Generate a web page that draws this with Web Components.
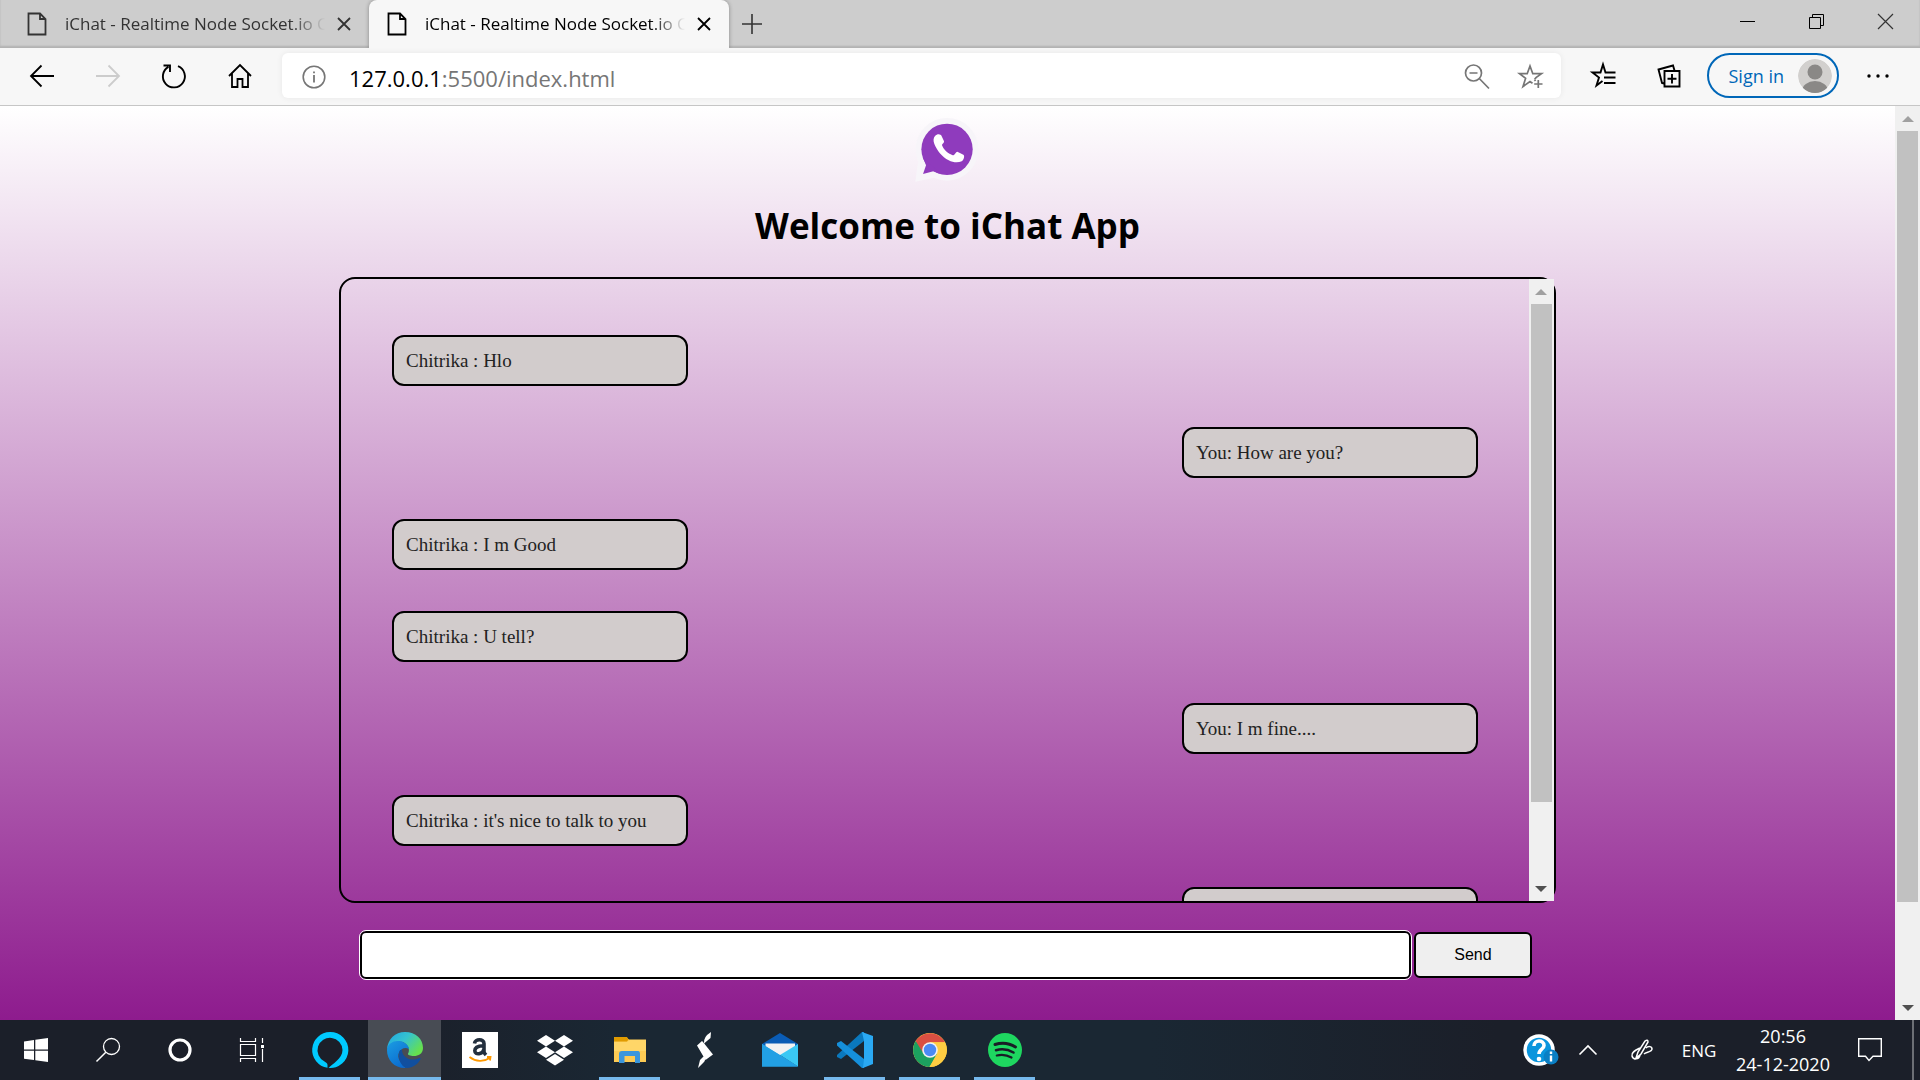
<!DOCTYPE html>
<html lang="en">
<head>
<meta charset="utf-8">
<title>iChat - Realtime Node Socket.io Chat App</title>
<style>
html,body{margin:0;height:100%}
body{font-family:"Open Sans","Noto Sans",sans-serif;overflow:hidden}
</style>
</head>
<body>
<desktop-screen></desktop-screen>
<script>
const ICONS = {
  file: [20,24,'<path d="M1.5 1.5H13L18.5 7V22.5H1.5ZM13 1.5V7H18.5" fill="none" stroke="currentColor" stroke-width="1.8"/>'],
  x: [14,14,'<path d="M1 1L13 13M13 1L1 13" stroke="currentColor" stroke-width="1.8"/>'],
  plus: [20,20,'<path d="M10 0V20M0 10H20" stroke="#333" stroke-width="1.6"/>'],
  min: [15,15,'<path d="M0 7.5H15" stroke="#000"/>'],
  restore: [15,15,'<path d="M.5 3.5H11.5V14.5H.5ZM3.5 3.5V.5H14.5V11.5H11.5" fill="none" stroke="#000"/>'],
  close: [15,15,'<path d="M0 0L15 15M15 0L0 15" stroke="#333" stroke-width="1.2"/>'],
  back: [24,22,'<path d="M11.5 .5L1 11L11.5 21.5M1 11H24" fill="none" stroke="currentColor" stroke-width="1.8"/>'],
  forward: [24,22,'<path d="M12.5 .5L23 11L12.5 21.5M23 11H0" fill="none" stroke="currentColor" stroke-width="1.8"/>'],
  reload: [24,26,'<path d="M16 3.2A11 11 0 1 1 6.5 3.8M1.5 2.5H8V9" fill="none" stroke="#000" stroke-width="1.9"/>'],
  home: [24,26,'<path d="M1 13L12 2L23 13M4 10.5V24H9.5V16H14.5V24H20V10.5" fill="none" stroke="#000" stroke-width="1.8"/>'],
  info: [24,24,'<circle cx="12" cy="12" r="10.8" fill="none" stroke="#767676" stroke-width="1.6"/><path d="M12 10V17.5M12 6.5V8.3" stroke="#767676" stroke-width="1.8"/>'],
  zoomout: [26,26,'<circle cx="9.5" cy="9" r="8" fill="none" stroke="#767676" stroke-width="1.7"/><path d="M15.3 14.5L25 24.5M5.5 9H13.5" stroke="#767676" stroke-width="1.7"/>'],
  star: [26,26,'<path d="M16.5 15.5L18 13.6L23.5 9.7H14.8L12 2L9.2 9.7H1.5L7.6 14.3L5 22.5L12 17.5L14.5 19.3M16.5 15.5L17.5 17M20.3 16V24M16.2 20H24.5" fill="none" stroke="#767676" stroke-width="1.7"/>'],
  favs: [26,26,'<path d="M23.5 9.5H14.5L12 1.5L9.5 9.5H1.5L8 14.5L5.5 22.5L11.5 18M14.5 9.5H24.5M13 14.5H24.5M13 20H24.5" fill="none" stroke="#000" stroke-width="1.9"/>'],
  collect: [24,24,'<path d="M8 7H22.5V22.5H7.5V7ZM15 10V19.5M10.5 14.8H19.5M7 19.5L5 19L1.5 5.5L16 1.5L17.5 6.5" fill="none" stroke="#000" stroke-width="1.9"/>'],
  avatar: [34,34,'<defs><clipPath id="c"><circle cx="17" cy="17" r="17"/></clipPath></defs><g clip-path="url(#c)"><circle cx="17" cy="17" r="17" fill="#d2d0ce"/><circle cx="17" cy="13" r="7.5" fill="#8a8886"/><ellipse cx="17" cy="32" rx="13" ry="10" fill="#8a8886"/></g>'],
  dots: [24,24,'<circle cx="3" cy="12" r="1.7"/><circle cx="12" cy="12" r="1.7"/><circle cx="21" cy="12" r="1.7"/>'],
  logo: [67,67,'<g transform="translate(-173.3 -16.7) scale(.33333)"><circle cx="619" cy="147" r="94" fill="#f7f5f9"/><path d="M532 184L524 244L580 232Z" fill="#f7f5f9"/><circle cx="619" cy="147" r="77" fill="#8f3bbd"/><path d="M546 170L556 195L547 221L578 213L600 222Z" fill="#8f3bbd"/><path d="M583 107C590 100 600 101 603 108L610 123C611 128 603 131 604 135C608 148 624 161 636 165C641 166 644 156 650 154L668 163C673 167 669 179 663 183C652 188 637 187 624 180C604 170 588 149 581 131C577 121 578 112 583 107Z" fill="#fff"/></g>'],
  win: [24,24,'<path d="M0 3.5L10 2V11.5H0ZM11.3 1.8L24 0V11.5H11.3ZM0 12.7H10V22L0 20.7ZM11.3 12.7H24V24L11.3 22.3Z" fill="#fff"/>'],
  search: [24,24,'<circle cx="15.5" cy="8.5" r="8" fill="none" stroke="#fff" stroke-width="1.3"/><path d="M9.8 14.2L.5 23.5" stroke="#fff" stroke-width="1.5"/>'],
  cortana: [24,24,'<circle cx="12" cy="12" r="10" fill="none" stroke="#fff" stroke-width="3.2"/>'],
  taskview: [24,24,'<path d="M.5 0V3.5H15.5V0M.5 6.5H15.5V17.5H.5ZM.5 24V20.5H15.5V24M22.5 0V5M22.5 11V24" fill="none" stroke="#fff" stroke-width="1.2"/><path d="M21 7H24V10H21Z" fill="#fff"/>'],
  alexa: [36,36,'<path fill="#00caff" fill-rule="evenodd" d="M18 0A18 18 0 0 0 15.5 35.8V33C15.5 31 14 30.5 12.5 29.5A12.5 12.5 0 1 1 30.5 18C30.5 27 20 32 16.5 35.9A18 18 0 1 0 18 0Z"/>'],
  edge: [36,36,'<defs><linearGradient id="a" x1="0" y1="0" x2="1" y2=".6"><stop offset="0" stop-color="#1fa5e3"/><stop offset=".5" stop-color="#35c3cf"/><stop offset="1" stop-color="#66e04e"/></linearGradient><linearGradient id="b" x1="0" y1="0" x2=".6" y2="1"><stop offset="0" stop-color="#1b9de2"/><stop offset="1" stop-color="#0b6bd0"/></linearGradient></defs><path d="M0 17C1 7 8 0 18 0C29 0 36 7 36 16C36 22 31 24 27 24C23 24 20.5 23 21 21.5C23 19 22 13 16 10C10 8 3 11 0 17Z" fill="url(#a)"/><path d="M0 18C0 12 6 8.5 12 9C18 9.5 22 14 22 17C15 13 8 22 13 29C16 33 20 36 18 36C7 36 0 28 0 18Z" fill="url(#b)"/><path d="M13 18C9 27 16 36 20 36C27 35.5 32 31 33.5 27C34 26 33 25.8 32 26C25 30 15 26 15 18Z" fill="#114f9f"/>'],
  amazon: [36,36,'<path d="M0 0H36V36H0Z" fill="#fff"/><path d="M12.5 11.5C13 6.5 22 6.5 22 11.5V19.5C22 21 23 22 24 23M21.5 13.8C15.5 14 12.8 15.5 12.8 18.8C12.8 23.5 21 22.5 22 17" fill="none" stroke="#232f3e" stroke-width="3.6"/><path d="M7.5 25C14 30 22 30 27.5 26M25 25L28.5 25L28 28.5" fill="none" stroke="#f90" stroke-width="1.8"/>'],
  dropbox: [36,31,'<path d="M9 0L18 5.7L9 11.4L0 5.7ZM27 0L36 5.7L27 11.4L18 5.7ZM9 11.6L18 17.3L9 23L0 17.3ZM27 11.6L36 17.3L27 23L18 17.3ZM18 19L27 24.7L18 30.4L9 24.7Z" fill="#fff"/>'],
  folder: [32,28,'<path d="M0 2Q0 1 1 1H12L15 3.5H32V26H0Z" fill="#fdcb54"/><path d="M0 2Q0 1 1 1H13L14.5 3.5L13 5.5H0Z" fill="#e09b00"/><path d="M0 6H13L16 4H32V15H0Z" fill="#ffd668"/><path d="M5 27V18Q5 15 8 15H24Q26 15 26 18V27H21V20H10.5V27Z" fill="#3a96dd"/>'],
  sbolt: [18,36,'<path d="M15 0L14.5 6L8 11.5Q7 5 15 0ZM7 10L17 22.5L9.5 28L1 13.5L6 9ZM8 24Q10 28 8 30L2 36L4 28Z" fill="#fff"/>'],
  mail: [36,34,'<path d="M0 11L18 0L36 11V16H0Z" fill="#0a5cb5"/><path d="M3.5 10.5H33V22H3.5Z" fill="#f2f2f2"/><path d="M0 11L36 33.5H0Z" fill="#28a8ea"/><path d="M36 11V33.5L18 22Z" fill="#3ac8f4"/><path d="M0 33.5V11L18 22L36 33.5Z" fill="#22a0e4"/>'],
  vscode: [36,36,'<path d="M0 25L4 27L27 9V0H25L0 23Z" fill="#0a78bd"/><path d="M0 11L4 9L27 27V36H25L0 13.5Z" fill="#1590dc"/><path d="M25 0L36 4V32L26 36L27 27V9Z" fill="#2aa9f3"/>'],
  chrome: [34,34,'<circle cx="17" cy="17" r="17" fill="#ffcd42"/><path d="M17 17L2.7 8A17 17 0 0 0 16.5 34L24.5 21Z" fill="#1ca15f"/><path d="M17 9.3H32A17 17 0 0 0 2.7 8L9.5 19Z" fill="#da4f42"/><path d="M24 20.5L16.5 34H17A17 17 0 0 0 32 9.3H17Z" fill="#ffcd42"/><circle cx="17" cy="17" r="7.8" fill="#f1f1f1"/><circle cx="17" cy="17" r="6.2" fill="#4b8af4"/>'],
  spotify: [34,34,'<circle cx="17" cy="17" r="17" fill="#1ed760"/><g fill="none" stroke="#191c26" stroke-linecap="round"><path d="M7 11.5Q18 8 27.5 14" stroke-width="3"/><path d="M8 17.2Q17 14.5 25.5 19.5" stroke-width="2.6"/><path d="M8.8 22.5Q16.5 20.5 23.5 24.5" stroke-width="2.2"/></g>'],
  help: [36,34,'<circle cx="16" cy="17" r="14" fill="#0a95dd" stroke="#fff" stroke-width="3.5"/><path d="M11 13C11 6.5 21 6.5 21 12.5C21 16.5 16 16 16 21" fill="none" stroke="#fff" stroke-width="3.6"/><circle cx="16" cy="26" r="2.3" fill="#fff"/><circle cx="28" cy="24" r="7.5" fill="#0a7fc4"/><path d="M28 22.5V28.5M28 18.5V21" stroke="#fff" stroke-width="2.4"/>'],
  up: [18,10,'<path d="M.5 9.5L9 1L17.5 9.5" fill="none" stroke="#fff" stroke-width="1.6"/>'],
  pen: [22,22,'<path d="M5 19L7 13L14 2Q17 0 17 3L10 15ZM9 9C5 11 0 13 1 17C2 21 8 21 9 16M13 15C15 13 21 13 21 10C21 7 17 7 15 9" fill="none" stroke="#fff" stroke-width="1.5"/>'],
  notes: [24,24,'<path d="M.7 .7H23.3V18.3H15L11 22.5L7.5 18.3H.7Z" fill="none" stroke="#fff" stroke-width="1.4"/>']
};

class UiIcon extends HTMLElement {
  connectedCallback() {
    const [w, h, body] = ICONS[this.getAttribute('name')];
    this.attachShadow({mode: 'open'}).innerHTML =
      `<style>:host{display:inline-flex;flex:none}svg{display:block;overflow:visible}</style>
       <svg width="${w}" height="${h}" viewBox="0 0 ${w} ${h}" aria-hidden="true">${body}</svg>`;
  }
}

function define(tag, html) {
  const template = document.createElement('template');
  template.innerHTML = html;
  customElements.define(tag, class extends HTMLElement {
    constructor() {
      super();
      this.attachShadow({mode: 'open'}).append(template.content.cloneNode(true));
    }
  });
}

const BTN = 'button{border:0;background:none;padding:0;margin:0;font:inherit;color:inherit;display:flex;align-items:center;justify-content:center}';

customElements.define('ui-icon', UiIcon);

define('scroll-bar', `<style>
:host{display:flex;flex-direction:column;flex:none;width:25px;background:#f0f0f0}
.arrow{height:25px;flex:none;display:flex;align-items:center;justify-content:center}
.arrow::before{content:"";border:6px solid transparent;border-top-width:0;border-bottom-color:#a0a0a0}
.arrow.down::before{border-width:6px 6px 0;border-color:#505050 transparent transparent}
.track{flex:1;padding:0 2px}
.thumb{height:var(--thumb);background:#c1c1c1}
</style><div class="arrow"></div><div class="track"><div class="thumb"></div></div><div class="arrow down"></div>`);

define('browser-tab', `<style>${BTN}
:host{display:flex;align-items:center;box-sizing:border-box;width:360px;padding:0 18px;color:#333}
:host([active]){background:#f7f7f7;color:#000;border-radius:8px 8px 0 0;box-shadow:0 0 4px #0005}
.title{margin:0 8px 0 18px;width:264px;overflow:hidden;white-space:nowrap;font-size:17px;line-height:24px;
-webkit-mask-image:linear-gradient(90deg,#000 225px,transparent 260px);mask-image:linear-gradient(90deg,#000 225px,transparent 260px)}
</style><ui-icon name="file"></ui-icon><span class="title"><slot></slot></span><button aria-label="Close tab"><ui-icon name="x"></ui-icon></button>`);

define('tab-strip', `<style>${BTN}
:host{display:flex;height:48px;padding-left:9px;background:#cdcdcd;box-shadow:inset 0 -2px 2px #0002}
.new{width:46px}.spacer{flex:1}
.win{width:69px;height:43px}
</style><browser-tab>iChat - Realtime Node Socket.io C</browser-tab><browser-tab active>iChat - Realtime Node Socket.io C</browser-tab>
<button class="new" aria-label="New tab"><ui-icon name="plus"></ui-icon></button><div class="spacer"></div>
<button class="win" aria-label="Minimize"><ui-icon name="min"></ui-icon></button><button class="win" aria-label="Restore"><ui-icon name="restore"></ui-icon></button><button class="win" aria-label="Close"><ui-icon name="close"></ui-icon></button>`);

define('address-bar', `<style>${BTN}
:host{display:flex;align-items:center;flex:1;height:45px;border-radius:6px;background:#fff;box-shadow:0 0 6px #0001;padding:2px 17px 0 20px;box-sizing:border-box}
.url{flex:1;margin-left:23px;padding-top:2px;font-size:22px;line-height:32px;color:#767676}
.url b{font-weight:400;color:#000}
button+button{margin-left:28px}
</style><button aria-label="Site information"><ui-icon name="info"></ui-icon></button>
<div class="url"><b>127.0.0.1</b>:5500/index.html</div>
<button aria-label="Zoom"><ui-icon name="zoomout"></ui-icon></button><button aria-label="Add favourite"><ui-icon name="star"></ui-icon></button>`);

define('tool-bar', `<style>${BTN}
:host{display:flex;align-items:center;height:58px;box-sizing:border-box;padding:1px 30px 3px;background:#f7f7f7;border-bottom:1px solid #c6c6c6}
.nav{display:flex;gap:42px;margin-right:30px}
.off{color:#ccc}
.tools{display:flex;gap:40px;margin:0 26px 0 30px}
.sign{height:45px;border:2px solid #0067b8;border-radius:23px;color:#0067b8;font-size:18px;padding:0 5px 0 20px;gap:14px;margin-right:27px}
</style><div class="nav"><button aria-label="Back"><ui-icon name="back"></ui-icon></button><button class="off" aria-label="Forward"><ui-icon name="forward"></ui-icon></button><button aria-label="Reload"><ui-icon name="reload"></ui-icon></button><button aria-label="Home"><ui-icon name="home"></ui-icon></button></div>
<address-bar></address-bar>
<div class="tools"><button aria-label="Favourites"><ui-icon name="favs"></ui-icon></button><button aria-label="Collections"><ui-icon name="collect"></ui-icon></button></div>
<button class="sign">Sign in<ui-icon name="avatar"></ui-icon></button>
<button aria-label="More"><ui-icon name="dots"></ui-icon></button>`);

define('chat-message', `<style>
:host{display:block;box-sizing:border-box;width:296px;border:2px solid #000;border-radius:12px;padding:12px;background:#d2cccc;color:#222;font:19px/23px "Liberation Serif",serif}
:host([mine]){align-self:flex-end}
</style><slot></slot>`);

define('chat-log', `<style>
:host{display:flex;box-sizing:border-box;height:626px;border:2px solid #000;border-radius:16px}
.list{flex:1;display:flex;flex-direction:column;gap:41px;padding:56px 51px;overflow:hidden}
::slotted(*){flex:none}
scroll-bar{--thumb:498px}
</style><div class="list"><slot></slot></div><scroll-bar></scroll-bar>`);

define('chat-form', `<style>
form{display:flex;align-items:center;gap:3px;margin:28px 24px 0 21px}
input{flex:1;min-width:0;height:48px;box-sizing:border-box;border:2px solid #000;border-radius:6px;outline:1px solid #fff;padding:0 12px;font:16px "Liberation Sans",sans-serif;background:#fff}
button{width:118px;height:46px;border:2px solid #000;border-radius:6px;background:#efefef;color:#000;font:16px "Liberation Sans",sans-serif}
:host{display:block}
</style><form onsubmit="return false"><input type="text" aria-label="Message"><button>Send</button></form>`);

define('chat-page', `<style>
:host{display:flex;flex:1;min-height:0;overflow:hidden}
main{flex:1;height:1024px;background:linear-gradient(#fff,purple)}
header{display:flex;flex-direction:column;align-items:center;padding-top:11px}
h1{margin:15px 0 24px;font-size:35px;line-height:54px;font-weight:700}
section{width:calc(64% + 4px);margin:0 auto}
scroll-bar{--thumb:771px}
</style><main><header><ui-icon name="logo"></ui-icon><h1>Welcome to iChat App</h1></header>
<section><chat-log>
<chat-message>Chitrika : Hlo</chat-message>
<chat-message mine>You: How are you?</chat-message>
<chat-message>Chitrika : I m Good</chat-message>
<chat-message>Chitrika : U tell?</chat-message>
<chat-message mine>You: I m fine....</chat-message>
<chat-message>Chitrika : it's nice to talk to you</chat-message>
<chat-message mine></chat-message>
</chat-log><chat-form></chat-form></section></main><scroll-bar></scroll-bar>`);

define('task-button', `<style>${BTN}
:host{display:flex;width:73px}
:host([system]){width:72px}
button{width:100%;position:relative}
:host([active]) button{background:#484c54}
:host([running]) button::after{content:"";position:absolute;bottom:0;left:6px;right:6px;height:3px;background:#76b9ed}
:host([active]) button::after{left:0;right:0}
</style><button><slot></slot></button>`);

define('task-bar', `<style>${BTN}
:host{display:flex;height:60px;flex:none;color:#fff;background:linear-gradient(90deg,#1b1f29 0,#1b1f29 20%,#1a2733 32%,#1a2733 60%,#1b1f29 78%,#1b1f29)}
.apps{display:flex;gap:2px;margin-left:5px;flex:1}
.sys{display:flex}
.tray{display:flex;align-items:center;font-size:17px}
.tray>*{flex:none}
.help{margin-right:20px}.pen{margin:0 30px 0 34px}.lang{width:32px}
.clock{width:120px;text-align:center;line-height:28px;font-size:18px;margin:0 15px 0 8px}
.end{align-self:stretch;width:6px;margin-left:30px;border-left:2px solid #6c6f75}
</style><div class="sys"><task-button system><ui-icon name="win"></ui-icon></task-button><task-button system><ui-icon name="search"></ui-icon></task-button><task-button system><ui-icon name="cortana"></ui-icon></task-button><task-button system><ui-icon name="taskview"></ui-icon></task-button></div>
<div class="apps"><task-button running><ui-icon name="alexa"></ui-icon></task-button><task-button running active><ui-icon name="edge"></ui-icon></task-button><task-button><ui-icon name="amazon"></ui-icon></task-button><task-button><ui-icon name="dropbox"></ui-icon></task-button><task-button running><ui-icon name="folder"></ui-icon></task-button><task-button><ui-icon name="sbolt"></ui-icon></task-button><task-button><ui-icon name="mail"></ui-icon></task-button><task-button running><ui-icon name="vscode"></ui-icon></task-button><task-button running><ui-icon name="chrome"></ui-icon></task-button><task-button running><ui-icon name="spotify"></ui-icon></task-button></div>
<div class="tray"><button class="help" aria-label="Help"><ui-icon name="help"></ui-icon></button><button aria-label="Hidden icons"><ui-icon name="up"></ui-icon></button><button class="pen" aria-label="Pen"><ui-icon name="pen"></ui-icon></button><button class="lang">ENG</button><div class="clock"><div>20:56</div><div>24-12-2020</div></div><button aria-label="Notifications"><ui-icon name="notes"></ui-icon></button><div class="end"></div></div>`);

define('desktop-screen', `<style>:host{display:flex;flex-direction:column;height:100vh}tab-strip,tool-bar{flex:none}</style>
<tab-strip></tab-strip><tool-bar></tool-bar><chat-page></chat-page><task-bar></task-bar>`);
</script>
</body>
</html>
